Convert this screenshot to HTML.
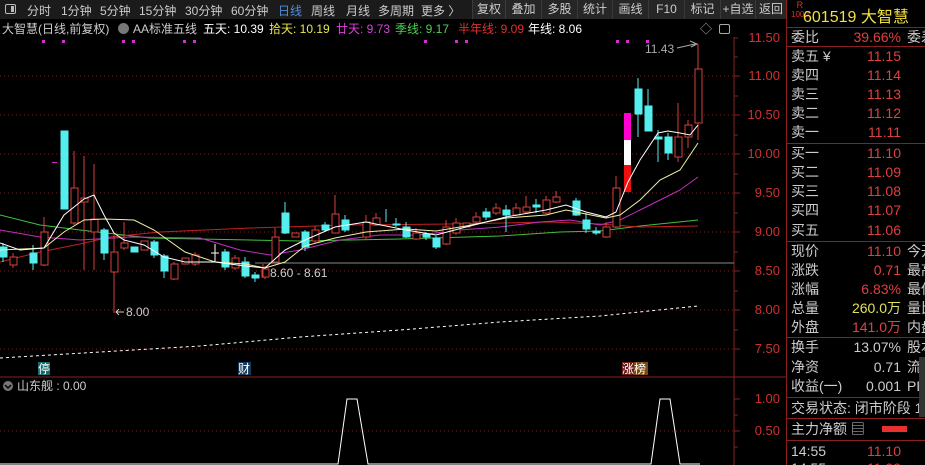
<!DOCTYPE html>
<html><head><meta charset="utf-8"><style>
*{margin:0;padding:0;box-sizing:border-box}
html,body{width:925px;height:465px;overflow:hidden}
body{background:#000;font-family:"Liberation Sans","Noto Sans CJK SC",sans-serif;position:relative;color:#ccc}
.tb{position:absolute;left:0;top:0;width:786px;height:19px;background:#1b1b1b;font-size:12px;color:#ccc}
.tb span{position:absolute;top:2px;white-space:nowrap}
.btn{position:absolute;top:0;height:19px;background:#262626;border-left:1px solid #3a3a3a;font-size:12px;line-height:19px;text-align:center;color:#ccc}
.info{position:absolute;top:20px;font-size:12px;white-space:nowrap}
.rp{position:absolute;left:786px;top:0;width:139px;height:465px;border-left:1px solid #8a1f1f;overflow:hidden}
.row{position:absolute;left:4px;width:140px;height:19px;font-size:14px;line-height:19px;color:#ccc;white-space:nowrap}
.row .v{position:absolute;right:30px;color:#e04040}
.row .c{position:absolute;left:116px;color:#ccc}
.hl{position:absolute;left:0;width:139px;height:1px;background:#8a1f1f}
.ax{position:absolute;font-size:13px;color:#d03030;right:145px;text-align:right}
</style></head><body>
<div class="tb">
<span style="left:5px;top:4px;width:11px;height:10px;border:1px solid #bbb;border-radius:2px"></span>
<span style="left:11px;top:6px;width:3px;height:6px;background:#bbb"></span>
<span style="left:27px">分时</span><span style="left:61px">1分钟</span><span style="left:100px">5分钟</span><span style="left:139px">15分钟</span><span style="left:185px">30分钟</span><span style="left:231px">60分钟</span><span style="left:278px;color:#4d8fe0">日线</span><span style="left:311px">周线</span><span style="left:346px">月线</span><span style="left:378px">多周期</span><span style="left:421px">更多 〉</span>
</div>
<div class="btn" style="left:472px;width:33px">复权</div><div class="btn" style="left:505px;width:36px">叠加</div><div class="btn" style="left:541px;width:36px">多股</div><div class="btn" style="left:577px;width:35px">统计</div><div class="btn" style="left:612px;width:36px">画线</div><div class="btn" style="left:648px;width:36px">F10</div><div class="btn" style="left:684px;width:36px">标记</div><div class="btn" style="left:720px;width:35px">+自选</div><div class="btn" style="left:755px;width:31px">返回</div>
<div class="info" style="left:2px;color:#ccc">大智慧(日线,前复权)</div>
<div style="position:absolute;left:118px;top:23px;width:11px;height:11px;border-radius:50%;background:#777"></div>
<div class="info" style="left:133px;color:#ccc">AA标准五线</div>
<div class="info" style="left:203px;color:#fff">五天: 10.39</div>
<div class="info" style="left:269px;color:#e8e84a">拾天: 10.19</div>
<div class="info" style="left:336px;color:#e040e0">廿天: 9.73</div>
<div class="info" style="left:395px;color:#50d050">季线: 9.17</div>
<div class="info" style="left:458px;color:#e03030">半年线: 9.09</div>
<div class="info" style="left:528px;color:#fff">年线: 8.06</div>
<div class="info" style="left:700px;color:#aaa">◇</div>
<div style="position:absolute;left:719px;top:24px;width:11px;height:10px;border:1px solid #aaa;border-radius:2px"></div>

<svg width="786" height="465" style="position:absolute;left:0;top:0">
<g stroke="#7a2020" stroke-dasharray="1,3">
<line x1="0" y1="76" x2="734" y2="76"/><line x1="0" y1="115" x2="734" y2="115"/><line x1="0" y1="154" x2="734" y2="154"/><line x1="0" y1="193" x2="734" y2="193"/><line x1="0" y1="232" x2="734" y2="232"/><line x1="0" y1="271" x2="734" y2="271"/><line x1="0" y1="310" x2="734" y2="310"/><line x1="0" y1="349" x2="734" y2="349"/><line x1="0" y1="431" x2="734" y2="431"/>
</g>
<line x1="734" y1="37" x2="734" y2="465" stroke="#8a1f1f"/>
<line x1="0" y1="377" x2="786" y2="377" stroke="#8a1f1f"/>
<g stroke="#8a1f1f"><line x1="734" y1="57" x2="738" y2="57"/><line x1="734" y1="96" x2="738" y2="96"/><line x1="734" y1="135" x2="738" y2="135"/><line x1="734" y1="174" x2="738" y2="174"/><line x1="734" y1="213" x2="738" y2="213"/><line x1="734" y1="252" x2="738" y2="252"/><line x1="734" y1="291" x2="738" y2="291"/><line x1="734" y1="330" x2="738" y2="330"/><line x1="734" y1="38" x2="738" y2="38"/><line x1="734" y1="76" x2="740" y2="76"/><line x1="734" y1="115" x2="740" y2="115"/><line x1="734" y1="154" x2="740" y2="154"/><line x1="734" y1="193" x2="740" y2="193"/><line x1="734" y1="232" x2="740" y2="232"/><line x1="734" y1="271" x2="740" y2="271"/><line x1="734" y1="310" x2="740" y2="310"/><line x1="734" y1="349" x2="740" y2="349"/><line x1="734" y1="399" x2="740" y2="399"/><line x1="734" y1="431" x2="740" y2="431"/><line x1="734" y1="415" x2="738" y2="415"/><line x1="734" y1="447" x2="738" y2="447"/></g>
<g fill="#d030d0"><rect x="42" y="40" width="3" height="3"/><rect x="62" y="40" width="3" height="3"/><rect x="122" y="40" width="3" height="3"/><rect x="132" y="40" width="3" height="3"/><rect x="183" y="40" width="3" height="3"/><rect x="193" y="40" width="3" height="3"/><rect x="424" y="40" width="3" height="3"/><rect x="455" y="40" width="3" height="3"/><rect x="465" y="40" width="3" height="3"/><rect x="616" y="40" width="3" height="3"/><rect x="626" y="40" width="3" height="3"/><rect x="646" y="40" width="3" height="3"/><rect x="52" y="162" width="5" height="1"/></g>
<line x1="255" y1="263" x2="734" y2="263" stroke="#888"/>
<polyline fill="none" stroke="#fff" stroke-dasharray="3,3" points="0,358 100,352 200,346 300,337 400,330 500,322 600,316 698,306"/>
<polyline fill="none" stroke="#40c040" points="0,215 40,225 80,230 150,238 250,240 300,241 400,239 500,236 560,232 600,231 640,226 698,220"/>
<polyline fill="none" stroke="#c02020" points="0,262 40,252 80,244 110,237 160,232 250,228 350,225 450,224 550,222 600,224 640,227 698,226"/>
<polyline fill="none" stroke="#c030c0" points="0,230 40,237 80,240 130,237 200,238 240,250 270,255 300,250 340,240 380,235 420,235 460,230 500,227 540,222 570,220 600,225 620,220 640,210 660,200 680,190 698,177"/>
<g stroke-width="1">
<g stroke="#d8413a" fill="#000">
<line x1="13" y1="253" x2="13" y2="268"/><rect x="10" y="257" width="7" height="8"/>
<line x1="44" y1="217" x2="44" y2="266"/><rect x="41" y="232" width="7" height="33"/>
<line x1="74" y1="151" x2="74" y2="225"/><rect x="71" y="188" width="7" height="35"/>
<line x1="84" y1="156" x2="84" y2="270"/><rect x="81" y="198" width="7" height="4"/>
<line x1="94" y1="164" x2="94" y2="270"/><rect x="91" y="219" width="7" height="13"/>
<line x1="114" y1="235" x2="114" y2="313"/><rect x="111" y="252" width="7" height="20"/>
<line x1="124" y1="222" x2="124" y2="250"/><rect x="121" y="243" width="7" height="5"/>
<rect x="141" y="241" width="7" height="9"/>
<line x1="174" y1="262" x2="174" y2="280"/><rect x="171" y="264" width="7" height="15"/>
<rect x="182" y="258" width="7" height="6"/>
<line x1="195" y1="252" x2="195" y2="266"/><rect x="192" y="255" width="7" height="9"/>
<line x1="235" y1="255" x2="235" y2="270"/><rect x="232" y="258" width="7" height="10"/>
<line x1="265" y1="266" x2="265" y2="279"/><rect x="262" y="269" width="7" height="8"/>
<line x1="275" y1="228" x2="275" y2="262"/><rect x="272" y="237" width="7" height="25"/>
<rect x="292" y="233" width="7" height="4"/>
<line x1="315" y1="226" x2="315" y2="243"/><rect x="312" y="230" width="7" height="11"/>
<line x1="335" y1="195" x2="335" y2="233"/><rect x="332" y="214" width="7" height="19"/>
<line x1="366" y1="215" x2="366" y2="239"/><rect x="363" y="222" width="7" height="15"/>
<line x1="376" y1="213" x2="376" y2="226"/><rect x="373" y="218" width="7" height="7"/>
<line x1="416" y1="228" x2="416" y2="240"/><rect x="413" y="233" width="7" height="6"/>
<line x1="446" y1="220" x2="446" y2="245"/><rect x="443" y="227" width="7" height="17"/>
<line x1="456" y1="218" x2="456" y2="235"/><rect x="453" y="223" width="7" height="10"/>
<rect x="463" y="223" width="7" height="4"/>
<line x1="476" y1="212" x2="476" y2="224"/><rect x="473" y="217" width="7" height="5"/>
<line x1="496" y1="203" x2="496" y2="215"/><rect x="493" y="208" width="7" height="5"/>
<line x1="516" y1="203" x2="516" y2="216"/><rect x="513" y="208" width="7" height="7"/>
<line x1="526" y1="196" x2="526" y2="214"/><rect x="523" y="207" width="7" height="5"/>
<line x1="546" y1="196" x2="546" y2="214"/><rect x="543" y="200" width="7" height="13"/>
<line x1="556" y1="191" x2="556" y2="203"/><rect x="553" y="197" width="7" height="5"/>
<line x1="606" y1="222" x2="606" y2="238"/><rect x="603" y="227" width="7" height="10"/>
<line x1="616" y1="176" x2="616" y2="228"/><rect x="613" y="188" width="7" height="39"/>
<line x1="678" y1="103" x2="678" y2="162"/><rect x="675" y="137" width="7" height="20"/>
<line x1="688" y1="120" x2="688" y2="148"/><rect x="685" y="125" width="7" height="12"/>
<line x1="698" y1="44" x2="698" y2="140"/><rect x="695" y="69" width="7" height="54"/>
<line x1="263" y1="264" x2="263" y2="278"/>
</g>
<g stroke="#54eeee" fill="#54eeee">
<line x1="3" y1="243" x2="3" y2="262"/><rect x="0" y="247" width="7" height="10"/>
<line x1="33" y1="245" x2="33" y2="270"/><rect x="30" y="253" width="7" height="10"/>
<rect x="61" y="131" width="7" height="78"/>
<line x1="104" y1="228" x2="104" y2="260"/><rect x="101" y="230" width="7" height="23"/>
<rect x="131" y="247" width="7" height="5"/>
<line x1="154" y1="240" x2="154" y2="258"/><rect x="151" y="242" width="7" height="13"/>
<line x1="164" y1="254" x2="164" y2="278"/><rect x="161" y="256" width="7" height="15"/>
<line x1="225" y1="249" x2="225" y2="270"/><rect x="222" y="252" width="7" height="15"/>
<line x1="245" y1="257" x2="245" y2="278"/><rect x="242" y="262" width="7" height="14"/>
<line x1="255" y1="272" x2="255" y2="282"/><rect x="252" y="275" width="7" height="3"/>
<line x1="285" y1="202" x2="285" y2="234"/><rect x="282" y="213" width="7" height="20"/>
<line x1="305" y1="230" x2="305" y2="251"/><rect x="302" y="232" width="7" height="15"/>
<line x1="325" y1="222" x2="325" y2="232"/><rect x="322" y="225" width="7" height="5"/>
<line x1="345" y1="215" x2="345" y2="232"/><rect x="342" y="220" width="7" height="10"/>
<line x1="386" y1="209" x2="386" y2="222"/>
<line x1="396" y1="218" x2="396" y2="227"/><rect x="393" y="224" width="7" height="1"/>
<line x1="406" y1="222" x2="406" y2="238"/><rect x="403" y="227" width="7" height="10"/>
<line x1="426" y1="232" x2="426" y2="240"/><rect x="423" y="234" width="7" height="3"/>
<line x1="436" y1="236" x2="436" y2="249"/><rect x="433" y="238" width="7" height="9"/>
<line x1="486" y1="208" x2="486" y2="220"/><rect x="483" y="212" width="7" height="5"/>
<line x1="506" y1="205" x2="506" y2="232"/><rect x="503" y="210" width="7" height="5"/>
<line x1="536" y1="199" x2="536" y2="213"/><rect x="533" y="205" width="7" height="2"/>
<line x1="576" y1="198" x2="576" y2="216"/><rect x="573" y="201" width="7" height="14"/>
<line x1="586" y1="213" x2="586" y2="233"/><rect x="583" y="220" width="7" height="9"/>
<line x1="596" y1="227" x2="596" y2="235"/><rect x="593" y="231" width="7" height="2"/>
<line x1="638" y1="78" x2="638" y2="137"/><rect x="635" y="89" width="7" height="25"/>
<line x1="648" y1="89" x2="648" y2="131"/><rect x="645" y="106" width="7" height="25"/>
<line x1="658" y1="130" x2="658" y2="162"/><rect x="655" y="137" width="7" height="2"/>
<line x1="668" y1="133" x2="668" y2="160"/><rect x="665" y="137" width="7" height="16"/>
</g>
<line x1="215" y1="244" x2="215" y2="262" stroke="#fff"/><line x1="211" y1="253" x2="219" y2="253" stroke="#fff"/>
<rect x="624" y="113" width="7" height="27" fill="#ff00d0"/><rect x="624" y="140" width="7" height="25" fill="#fff"/><rect x="624" y="165" width="7" height="27" fill="#ee1010"/>
</g>
<polyline fill="none" stroke="#f0f0a0" points="0,250 44,248 64,232 84,220 104,219 134,220 154,230 185,252 215,262 245,264 265,268 285,262 305,246 335,238 366,232 406,229 436,231 466,226 506,218 546,215 566,210 586,214 606,218 620,215 640,200 660,180 680,170 698,143"/>
<polyline fill="none" stroke="#fff" points="0,243 20,250 44,248 64,215 84,199 94,195 104,215 114,233 124,240 144,245 164,257 185,262 215,262 245,266 265,268 285,250 305,240 335,227 366,222 406,230 436,235 466,227 506,217 546,210 566,205 586,212 606,217 616,212 628,182 640,160 658,133 668,131 680,133 690,135 698,125"/>
<g font-size="12" fill="#ccc" font-family="Liberation Sans, sans-serif">
<text x="126" y="316">8.00</text><path d="M124,312 H116 M119,309 L116,312 L119,315" stroke="#ccc" fill="none"/>
<text x="270" y="277">8.60 - 8.61</text>
<text x="645" y="53" fill="#aaa">11.43</text><path d="M677,48 L695,44 M690,41 L697,44 L691,47" stroke="#aaa" fill="none"/>
</g>
<rect x="38" y="362" width="12" height="13" fill="#136b6b"/><text x="38" y="373" font-size="12" fill="#fff" font-family="Noto Sans CJK SC">停</text>
<rect x="238" y="362" width="13" height="13" fill="#163a5c"/><text x="238" y="373" font-size="12" fill="#fff" font-family="Noto Sans CJK SC">财</text>
<rect x="622" y="362" width="12" height="13" fill="#6a1818"/><rect x="634" y="362" width="14" height="13" fill="#7a4a10"/><text x="622" y="373" font-size="12" fill="#fff" font-family="Noto Sans CJK SC">涨榜</text>
<circle cx="8" cy="386" r="5" fill="#777"/><path d="M5,385 L8,388 L11,385" stroke="#000" fill="none" stroke-width="1.5"/>
<text x="17" y="390" font-size="12" fill="#ccc" font-family="Liberation Sans, Noto Sans CJK SC, sans-serif">山东舰 : 0.00</text>
<polyline fill="none" stroke="#fff" points="0,464 338,464 347,399 357,399 368,464 651,464 660,399 670,399 680,464 700,464"/>
</svg>
<div class="ax" style="top:30px">11.50</div><div class="ax" style="top:68px">11.00</div><div class="ax" style="top:107px">10.50</div><div class="ax" style="top:146px">10.00</div><div class="ax" style="top:185px">9.50</div><div class="ax" style="top:224px">9.00</div><div class="ax" style="top:263px">8.50</div><div class="ax" style="top:302px">8.00</div><div class="ax" style="top:341px">7.50</div><div class="ax" style="top:391px">1.00</div><div class="ax" style="top:423px">0.50</div>
<div class="rp">
<div style="position:absolute;left:4px;top:1px;font-size:9px;color:#e03030;line-height:9px;text-align:center">R<br><span style="font-size:8px">1000</span></div>
<div style="position:absolute;left:16px;top:3px;font-size:16px;color:#f0e040;white-space:nowrap">601519 大智慧</div>
<div class="hl" style="top:27px"></div>
<div class="row" style="top:28px">委比<span class="v">39.66%</span><span class="c">委差</span></div>
<div class="hl" style="top:46px"></div>
<div class="row" style="top:47px">卖五 ¥<span class="v">11.15</span></div>
<div class="row" style="top:66px">卖四<span class="v">11.14</span></div>
<div class="row" style="top:85px">卖三<span class="v">11.13</span></div>
<div class="row" style="top:104px">卖二<span class="v">11.12</span></div>
<div class="row" style="top:123px">卖一<span class="v">11.11</span></div>
<div class="hl" style="top:143px"></div>
<div class="row" style="top:144px">买一<span class="v">11.10</span></div>
<div class="row" style="top:163px">买二<span class="v">11.09</span></div>
<div class="row" style="top:182px">买三<span class="v">11.08</span></div>
<div class="row" style="top:201px">买四<span class="v">11.07</span></div>
<div class="row" style="top:221px">买五<span class="v">11.06</span></div>
<div class="hl" style="top:241px"></div>
<div class="row" style="top:242px">现价<span class="v">11.10</span><span class="c">今开</span></div>
<div class="row" style="top:261px">涨跌<span class="v">0.71</span><span class="c">最高</span></div>
<div class="row" style="top:280px">涨幅<span class="v">6.83%</span><span class="c">最低</span></div>
<div class="row" style="top:299px">总量<span class="v" style="color:#e0e060">260.0万</span><span class="c">量比</span></div>
<div class="row" style="top:318px">外盘<span class="v">141.0万</span><span class="c">内盘</span></div>
<div class="hl" style="top:337px"></div>
<div class="row" style="top:338px">换手<span class="v" style="color:#ccc">13.07%</span><span class="c">股本</span></div>
<div class="row" style="top:358px">净资<span class="v" style="color:#ccc">0.71</span><span class="c">流通</span></div>
<div class="row" style="top:377px">收益(一)<span class="v" style="color:#ccc">0.001</span><span class="c">PE</span></div>
<div class="hl" style="top:397px"></div>
<div class="row" style="top:399px">交易状态: 闭市阶段 1</div>
<div class="hl" style="top:418px"></div>
<div class="row" style="top:420px">主力净额 ▤</div>
<div style="position:absolute;left:95px;top:426px;width:25px;height:6px;background:#e83030"></div>
<div class="hl" style="top:440px"></div>
<div class="row" style="top:442px">14:55<span class="v">11.10</span></div>
<div class="row" style="top:459px">14:55<span class="v">11.09</span></div>
<div style="position:absolute;left:132px;top:357px;width:8px;height:60px;background:#333"></div>
</div>
</body></html>
